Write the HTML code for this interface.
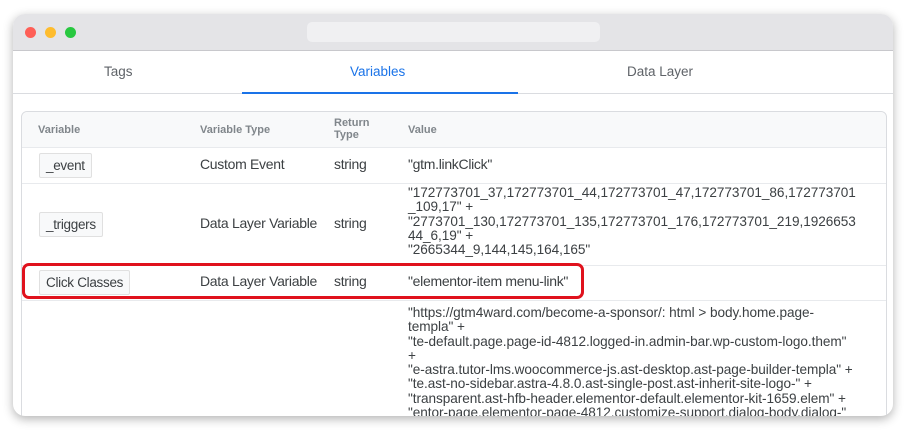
<!DOCTYPE html>
<html><head><style>
body{margin:0;width:906px;height:432px;background:#fff;position:relative;overflow:hidden;font-family:"Liberation Sans",sans-serif;}
.win{position:absolute;left:13px;top:14px;width:880px;height:402px;border-radius:12px;background:#fff;box-shadow:0 3px 10px rgba(0,0,0,.3);overflow:hidden;}
.bar{position:absolute;left:0;top:0;width:880px;height:36px;background:#e4e4e7;border-bottom:1px solid #c8c8cc;}
.dot{position:absolute;top:13px;width:11px;height:11px;border-radius:50%;}
.url{position:absolute;left:294px;top:8px;width:293px;height:20px;border-radius:5px;background:#f0f0f2;}
.tab{position:absolute;top:50px;font-size:13.5px;color:#5f6368;}
.line{position:absolute;left:0;top:79px;width:880px;height:1px;background:#dadce0;}
.ul{position:absolute;left:229px;top:78px;width:276px;height:2px;background:#1a73e8;}
.card{position:absolute;left:8px;top:97px;width:864px;height:320px;border:1px solid #dadce0;border-radius:6px;}
.hdr{position:absolute;left:0;top:0;width:864px;height:35px;background:#f8f9fa;border-bottom:1px solid #e8eaed;border-radius:6px 6px 0 0;}
.h{position:absolute;font-size:11px;color:#80868b;font-weight:bold;}
.t{position:absolute;font-size:14px;color:#3c4043;letter-spacing:-0.3px;}
.v{position:absolute;left:386px;font-size:13.6px;color:#3c4043;line-height:14.3px;letter-spacing:-0.05px;white-space:nowrap;}
.sep{position:absolute;left:0;width:864px;height:1px;background:#e8eaed;}
.chip{position:absolute;left:17px;border:1px solid #e0e0e0;background:#f8f9fa;border-radius:2px;padding:4px 6px;font-size:13.5px;color:#3c4043;letter-spacing:-0.3px;}
.red{position:absolute;left:22px;top:263px;width:556px;height:30px;border:3px solid #e0121d;border-radius:7px;}
</style></head><body>
<div class="win">
<div class="bar"><div class="dot" style="left:12px;background:#fe5f57"></div><div class="dot" style="left:32px;background:#febc2e"></div><div class="dot" style="left:52px;background:#28c840"></div><div class="url"></div></div>
<div class="tab" style="left:91px">Tags</div>
<div class="tab" style="left:337px;color:#1a73e8">Variables</div>
<div class="tab" style="left:614px">Data Layer</div>
<div class="line"></div><div class="ul"></div>
<div class="card">
<div class="hdr"></div>
<div class="h" style="left:16px;top:12px">Variable</div>
<div class="h" style="left:178px;top:12px">Variable Type</div>
<div class="h" style="left:312px;top:5px;line-height:12px">Return<br>Type</div>
<div class="h" style="left:386px;top:12px">Value</div>
<div class="chip" style="top:41px">_event</div>
<div class="t" style="left:178px;top:44px">Custom Event</div>
<div class="t" style="left:312px;top:44px">string</div>
<div class="t" style="left:386px;top:44px">"gtm.linkClick"</div>
<div class="sep" style="top:71px"></div>
<div class="chip" style="top:100px">_triggers</div>
<div class="t" style="left:178px;top:103px">Data Layer Variable</div>
<div class="t" style="left:312px;top:103px">string</div>
<div class="v" style="top:74px">"172773701_37,172773701_44,172773701_47,172773701_86,172773701<br>_109,17" +<br>"2773701_130,172773701_135,172773701_176,172773701_219,1926653<br>44_6,19" +<br>"2665344_9,144,145,164,165"</div>
<div class="sep" style="top:153px"></div>
<div class="chip" style="top:158px">Click Classes</div>
<div class="t" style="left:178px;top:161px">Data Layer Variable</div>
<div class="t" style="left:312px;top:161px">string</div>
<div class="t" style="left:386px;top:161px">"elementor-item menu-link"</div>
<div class="sep" style="top:188px"></div>
<div class="v" style="top:194px">"https://gtm4ward.com/become-a-sponsor/: html &gt; body.home.page-<br>templa" +<br>"te-default.page.page-id-4812.logged-in.admin-bar.wp-custom-logo.them"<br>+<br>"e-astra.tutor-lms.woocommerce-js.ast-desktop.ast-page-builder-templa" +<br>"te.ast-no-sidebar.astra-4.8.0.ast-single-post.ast-inherit-site-logo-" +<br>"transparent.ast-hfb-header.elementor-default.elementor-kit-1659.elem" +<br>"entor-page.elementor-page-4812.customize-support.dialog-body.dialog-"</div>
</div>
</div>
<div class="red"></div>
</body></html>
